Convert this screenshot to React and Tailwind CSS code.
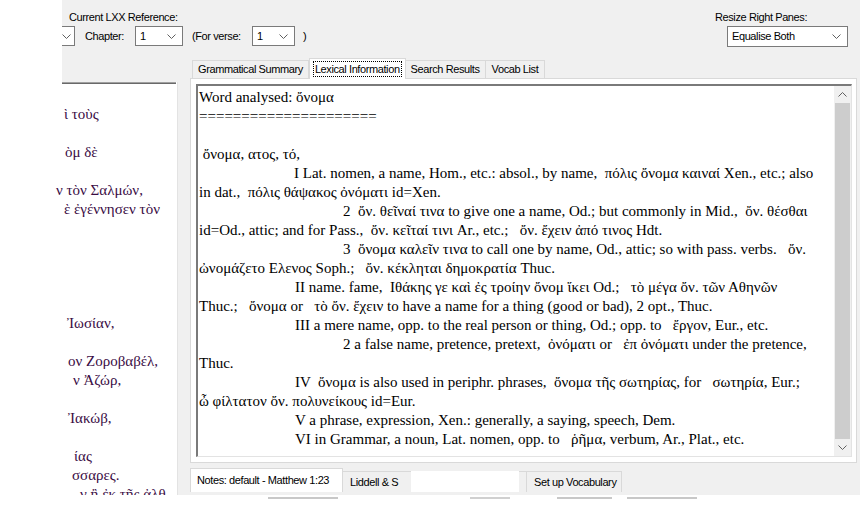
import React from "react";

const UI = { fontFamily: "'Liberation Sans', Arial, sans-serif" };
const SERIF = { fontFamily: "'Liberation Serif', 'DejaVu Serif', serif" };

function Chevron({ up = false }) {
  return (
    <svg width="9" height="5" viewBox="0 0 9 5" className="block">
      <polyline
        points={up ? "0.5,4.5 4.5,0.5 8.5,4.5" : "0.5,0.5 4.5,4.5 8.5,0.5"}
        fill="none"
        stroke="#606060"
        strokeWidth="1"
      />
    </svg>
  );
}

function Select({ className, value }) {
  return (
    <div className={"bg-white border border-[#7a7a7a] flex items-center justify-between pl-[4px] pr-[6px] text-black " + className}>
      <span>{value}</span>
      <Chevron />
    </div>
  );
}

const bodyLines = [
  { t: "Word analysed: ὄνομα", i: "" },
  { t: "=====================", i: "" },
  { t: "", i: "" },
  { t: " ὄνομα, ατος, τό,", i: "" },
  { t: "I Lat. nomen, a name, Hom., etc.: absol., by name,  πόλις ὄνομα καιναί Xen., etc.; also", i: "pl-[95px]" },
  { t: "in dat.,  πόλις θάψακος ὀνόματι id=Xen.", i: "" },
  { t: "2  ὄν. θεῖναί τινα to give one a name, Od.; but commonly in Mid.,  ὄν. θέσθαι", i: "pl-[144px]" },
  { t: "id=Od., attic; and for Pass.,  ὄν. κεῖταί τινι Ar., etc.;   ὄν. ἔχειν ἀπό τινος Hdt.", i: "" },
  { t: "3  ὄνομα καλεῖν τινα to call one by name, Od., attic; so with pass. verbs.   ὄν.", i: "pl-[144px]" },
  { t: "ὠνομάζετο Ελενος Soph.;   ὄν. κέκληται δημοκρατία Thuc.", i: "" },
  { t: "II name. fame,  Ιθάκης γε καὶ ἐς τροίην ὄνομ ἵκει Od.;   τὸ μέγα ὄν. τῶν Αθηνῶν", i: "pl-[96px]" },
  { t: "Thuc.;   ὄνομα or   τὸ ὄν. ἔχειν to have a name for a thing (good or bad), 2 opt., Thuc.", i: "" },
  { t: "III a mere name, opp. to the real person or thing, Od.; opp. to   ἔργον, Eur., etc.", i: "pl-[96px]" },
  { t: "2 a false name, pretence, pretext,  ὀνόματι or   ἐπ ὀνόματι under the pretence,", i: "pl-[144px]" },
  { t: "Thuc.", i: "" },
  { t: "IV  ὄνομα is also used in periphr. phrases,  ὄνομα τῆς σωτηρίας, for   σωτηρία, Eur.;", i: "pl-[96px]" },
  { t: "ὦ φίλτατον ὄν. πολυνείκους id=Eur.", i: "" },
  { t: "V a phrase, expression, Xen.: generally, a saying, speech, Dem.", i: "pl-[96px]" },
  { t: "VI in Grammar, a noun, Lat. nomen, opp. to   ῥῆμα, verbum, Ar., Plat., etc.", i: "pl-[96px]" },
];

const leftLines = [
  { t: "ὶ τοὺς", i: "pl-[64px]" },
  { t: "", i: "" },
  { t: "ὸμ δὲ", i: "pl-[65px]" },
  { t: "", i: "" },
  { t: "ν τὸν Σαλμών,", i: "pl-[56px]" },
  { t: "ὲ ἐγέννησεν τὸν", i: "pl-[64px]" },
  { t: "", i: "" },
  { t: "", i: "" },
  { t: "", i: "" },
  { t: "", i: "" },
  { t: "", i: "" },
  { t: "Ἰωσίαν,", i: "pl-[67px]" },
  { t: "", i: "" },
  { t: "ον Ζοροβαβέλ,", i: "pl-[68px]" },
  { t: "ν Ἀζώρ,", i: "pl-[73px]" },
  { t: "", i: "" },
  { t: "Ἰακώβ,", i: "pl-[68px]" },
  { t: "", i: "" },
  { t: "ίας", i: "pl-[74px]" },
  { t: "σσαρες.", i: "pl-[72px]" },
  { t: "ν ἢ ἐκ τῆς ἀλθ", i: "pl-[80px]" },
];

export default function App() {
  return (
    <div className="w-[860px] h-[520px] bg-white overflow-hidden text-[11px] tracking-[-0.4px] text-black" style={UI}>
      {/* Header */}
      <div className="flex h-[57px]">
        <div className="w-[62px] bg-white" />
        <div className="flex-1 bg-[#f0f0f0] flex justify-between pt-[10px] pr-[12px]">
          <div className="flex flex-col">
            <div className="h-[16px] leading-[14px] pl-[7px]">Current LXX Reference:</div>
            <div className="flex items-center h-[20px]">
              <div className="w-[13px] h-[20px] border-y border-r border-[#7a7a7a] bg-white flex items-center justify-end pr-[3px]">
                <Chevron />
              </div>
              <div className="w-[50px] pl-[10px] box-content">Chapter:</div>
              <Select className="w-[48px] h-[20px]" value="1" />
              <div className="w-[60px] pl-[9px] box-content">(For verse:</div>
              <Select className="w-[43px] h-[20px]" value="1" />
              <div className="pl-[8px]">)</div>
            </div>
          </div>
          <div className="flex flex-col w-[133px]">
            <div className="h-[16px] leading-[14px]">Resize Right Panes:</div>
            <Select className="ml-[12px] w-[121px] h-[21px]" value="Equalise Both" />
          </div>
        </div>
      </div>

      {/* Body */}
      <div className="flex h-[438px] overflow-hidden">
        {/* Left column */}
        <div className="w-[190px] flex flex-col min-h-0">
          <div className="h-[25px] shrink-0 flex">
            <div className="w-[62px] bg-white" />
            <div className="flex-1 bg-[#f0f0f0]" />
          </div>
          <div className="flex-1 min-h-0 flex">
            <div className="w-[177px] bg-white flex flex-col min-h-0 overflow-hidden">
              <div className="flex h-[2px] shrink-0">
                <div className="w-[62px]" />
                <div className="w-[114px] border-t border-[#a0a0a0] border-b border-b-[#696969]" />
              </div>
              <div
                className="pt-[21px] text-[15px] leading-[19px] tracking-normal text-[#3a0c44] whitespace-pre"
                style={SERIF}
              >
                {leftLines.map((l, k) => (
                  <div key={k} className={"h-[19px] " + l.i}>{l.t}</div>
                ))}
              </div>
            </div>
            <div className="flex-1 bg-[#f0f0f0] border-l border-[#e3e3e3]" />
          </div>
        </div>

        {/* Right column */}
        <div className="flex-1 bg-[#f0f0f0] flex flex-col">
          {/* Tabs */}
          <div className="h-[21px] shrink-0 flex items-end pl-[2px]">
            <div className="h-[18px] px-[5px] flex items-center border border-b-0 border-[#d9d9d9] bg-[#f0f0f0]">Grammatical Summary</div>
            <div className="h-[21px] px-[3px] flex items-center border border-b-0 border-[#d9d9d9] bg-white -mb-px relative z-10">
              <span className="border border-dotted border-black px-[1px] leading-[14px]">Lexical Information</span>
            </div>
            <div className="h-[18px] px-[5px] flex items-center border border-b-0 border-l-0 border-[#d9d9d9] bg-[#f0f0f0]">Search Results</div>
            <div className="h-[18px] px-[6px] flex items-center border border-b-0 border-l-0 border-[#d9d9d9] bg-[#f0f0f0]">Vocab List</div>
          </div>
          {/* Tab panel */}
          <div className="h-[385px] shrink-0 mr-[3px] border border-[#d9d9d9] bg-white p-[5px] pr-[4px]">
            <div className="h-full flex border-t-2 border-l-2 border-t-[#7a7a7a] border-l-[#7a7a7a] border-r border-b border-r-[#e3e3e3] border-b-[#e3e3e3] bg-white">
              <div
                className="flex-1 pl-[1px] pt-[2px] text-[15px] leading-[19px] tracking-normal whitespace-pre overflow-hidden"
                style={SERIF}
              >
                {bodyLines.map((l, k) => (
                  <div key={k} className={"h-[19px] " + l.i}>{l.t}</div>
                ))}
              </div>
              <div className="w-[17px] bg-[#f0f0f0] flex flex-col">
                <div className="h-[17px] flex items-center justify-center"><Chevron up /></div>
                <div className="flex-1 mx-[1px] bg-[#cdcdcd]" />
                <div className="h-[17px] flex items-center justify-center"><Chevron /></div>
              </div>
            </div>
          </div>
          {/* Bottom tabs */}
          <div className="h-[32px] shrink-0 flex items-end pb-[3px]">
            <div className="w-[153px] h-[24px] pl-[6px] flex items-center border border-b-0 border-[#d9d9d9] bg-white">Notes: default - Matthew 1:23</div>
            <div className="h-[21px] flex items-stretch">
              <div className="w-[68px] pl-[7px] flex items-center border-t border-[#d9d9d9] bg-[#f0f0f0]">Liddell &amp; S</div>
              <div className="w-[108px] bg-white" />
              <div className="w-[7px] border-t border-[#d9d9d9] bg-[#f0f0f0]" />
              <div className="w-[96px] pl-[7px] flex items-center border border-b-0 border-[#d9d9d9] bg-[#f0f0f0]">Set up Vocabulary</div>
            </div>
            <div className="flex-1 h-[21px]" />
          </div>
        </div>
      </div>

      {/* Torn bottom */}
      <div className="h-[25px] bg-white flex pt-[2px]">
        <div className="w-[268px]" />
        <div className="w-[70px] h-[2px] bg-[#c8c8c8]" />
        <div className="w-[132px]" />
        <div className="w-[40px] h-[2px] bg-[#d0d0d0]" />
        <div className="w-[47px]" />
        <div className="w-[55px] h-[2px] bg-[#c8c8c8]" />
        <div className="w-[15px]" />
        <div className="w-[70px] h-[2px] bg-[#c8c8c8]" />
      </div>
    </div>
  );
}
